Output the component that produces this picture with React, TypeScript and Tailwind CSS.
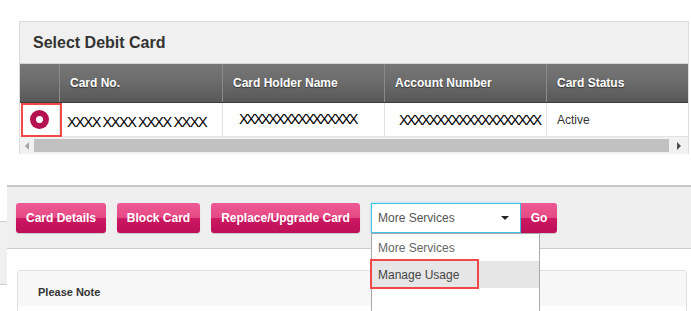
import React from "react";

const font = { fontFamily: '"Liberation Sans", Arial, sans-serif' };

function PinkButton({ label, w, className = "" }: { label: string; w: string; className?: string }) {
  return (
    <div
      className={`relative h-[30px] ${w} flex items-center justify-center rounded-[3px] text-[12px] font-bold text-white bg-[linear-gradient(to_bottom,#ec5a93_0%,#e64a86_48%,#cb1862_52%,#bd0f57_100%)] shadow-[0_1px_1px_rgba(0,0,0,0.15)] ${className}`}
    >
      {label}
    </div>
  );
}

export default function App() {
  return (
    <div className="w-[691px] h-[311px] bg-white overflow-hidden relative" style={font}>
      {/* Select Debit Card panel */}
      <div className="ml-[19px] mt-[21px] w-[670px] border-x border-t border-[#dcdcdc]">
        <div className="h-[42px] bg-[#f0f0f0] border-b border-[#d6d6d6] flex items-center pl-[13px] text-[16px] font-bold text-[#333]">
          Select Debit Card
        </div>
        <div className="flex h-[39px] bg-[linear-gradient(to_bottom,#777_0%,#6a6a6a_50%,#585858_100%)] border-b border-[#3c3c3c] text-white text-[12px] font-bold [text-shadow:0_1px_1px_#333]">
          <div className="w-[40px] border-r border-[#8a8a8a]" />
          <div className="w-[163px] border-r border-[#8a8a8a] flex items-center pl-[10px]">Card No.</div>
          <div className="w-[162px] border-r border-[#8a8a8a] flex items-center pl-[10px]">Card Holder Name</div>
          <div className="w-[162px] border-r border-[#8a8a8a] flex items-center pl-[10px]">Account Number</div>
          <div className="flex-1 flex items-center pl-[10px]">Card Status</div>
        </div>
        <div className="flex h-[34px] bg-white text-black border-b border-[#e2e2e2]">
          <div className="w-[40px] border-r border-[#e2e2e2] flex items-center justify-center relative">
            <div className="absolute left-[1px] top-0 w-[41px] h-[34px] border-2 border-[#f04848]" />
            <div className="w-[19px] h-[19px] rounded-full bg-[#b3114f] flex items-center justify-center">
              <div className="w-[7px] h-[7px] rounded-full bg-white" />
            </div>
          </div>
          <div className="w-[163px] border-r border-[#e2e2e2] flex items-center pl-[7px] pt-[6px] text-[14.5px] tracking-[-1.45px] whitespace-nowrap overflow-hidden">
            XXXX XXXX XXXX XXXX
          </div>
          <div className="w-[162px] border-r border-[#e2e2e2] flex items-center pl-[16px] text-[14.5px] tracking-[-2.35px] whitespace-nowrap overflow-hidden">
            XXXXXXXXXXXXXXXX
          </div>
          <div className="w-[162px] border-r border-[#e2e2e2] flex items-center pl-[14px] pt-[2px] text-[14.5px] tracking-[-2.25px] whitespace-nowrap overflow-hidden">
            XXXXXXXXXXXXXXXXXXX
          </div>
          <div className="flex-1 flex items-center pl-[10px] text-[12px] text-[#333]">Active</div>
        </div>
        <div className="h-[17px] bg-[#f1f1f1] flex items-center">
          <div className="w-[14px] flex items-center justify-center">
            <div className="w-0 h-0 border-y-[4px] border-y-transparent border-r-[4px] border-r-[#a3a3a3]" />
          </div>
          <div className="flex-1 h-[13px] bg-[#c1c1c1]" />
          <div className="w-[19px] flex items-center justify-center">
            <div className="w-0 h-0 border-y-[4px] border-y-transparent border-l-[4px] border-l-[#505050]" />
          </div>
        </div>
      </div>

      {/* Lower section */}
      <div className="mt-[31px] flex">
        <div className="w-[7px] shrink-0 mt-[36px] h-[64px] bg-[#f0f0f0] border-y border-[#cfcfcf]" />
        <div className="flex-1">
          <div className="h-[64px] bg-[#efefef] border-t-2 border-[#c9c9c9] border-b border-b-[#cdcdcd] pl-[9px] pt-[16px] flex items-start">
            <PinkButton label="Card Details" w="w-[90px]" />
            <PinkButton label="Block Card" w="w-[83px]" className="ml-[11px]" />
            <PinkButton label="Replace/Upgrade Card" w="w-[149px]" className="ml-[11px]" />
            <div className="relative ml-[11px] w-[150px] h-[30px]">
              <div className="w-full h-full bg-white border border-[#41c3ea] flex items-center pl-[6px] text-[12px] text-[#555] shadow-[0_0_2px_rgba(65,195,234,0.6)]">
                More Services
                <div className="absolute right-[12px] top-[13px] w-0 h-0 border-x-[4px] border-x-transparent border-t-[4px] border-t-[#222]" />
              </div>
              <div className="absolute left-0 top-[30px] w-[169px] h-[90px] bg-white border border-[#a9a9a9] z-10 text-[12px]">
                <div className="h-[27px] flex items-center pl-[6px] text-[#666]">More Services</div>
                <div className="h-[27px] bg-[#e6e6e6] flex items-center pl-[6px] text-[#444] relative">
                  Manage Usage
                  <div className="absolute left-[-2px] top-[-2px] w-[109px] h-[30px] border-2 border-[#f04848]" />
                </div>
              </div>
            </div>
            <PinkButton label="Go" w="w-[36px]" className="rounded-l-none" />
          </div>
          <div className="ml-[10px] mt-[21px] w-[670px] h-[60px] bg-white border border-[#e0e0e0] rounded-[3px] overflow-hidden">
            <div className="h-[35px] bg-[#f7f7f7] pl-[20px] pt-[13px] text-[11px] font-bold text-[#333]">
              Please Note
            </div>
          </div>
        </div>
      </div>
    </div>
  );
}
